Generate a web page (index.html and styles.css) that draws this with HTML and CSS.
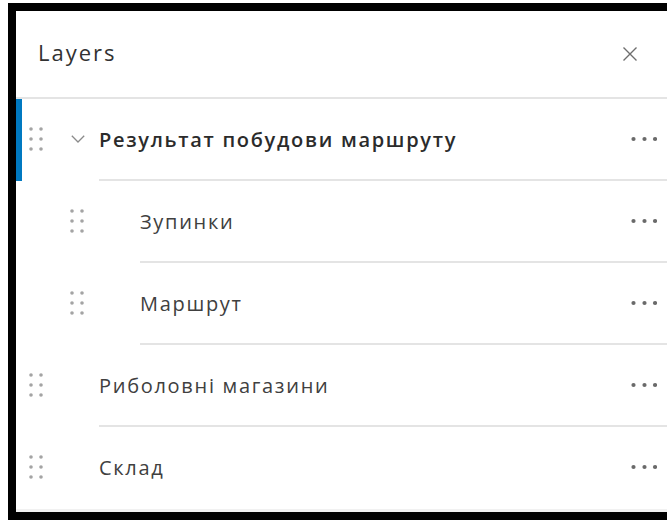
FILE: index.html
```html
<!DOCTYPE html>
<html lang="uk">
<head>
<meta charset="utf-8">
<title>Layers</title>
<link rel="stylesheet" href="styles.css">
</head>
<body>
<div class="frame">
  <section class="panel">
    <header class="panel-header">
      <h2 class="panel-title">Layers</h2>
      <button class="close" aria-label="Close">
        <svg width="16" height="16" viewBox="0 0 16 16"><path d="M1.5 1.5 L14.5 14.5 M14.5 1.5 L1.5 14.5" stroke="#6e6e6e" stroke-width="1.4" fill="none"/></svg>
      </button>
    </header>

    <ul class="layer-list">
      <li class="layer layer--active">
        <span class="handle"><svg width="14" height="24" viewBox="0 0 14 24"><g fill="#a4a4a4"><circle cx="2" cy="2" r="1.8"/><circle cx="12" cy="2" r="1.8"/><circle cx="2" cy="12" r="1.8"/><circle cx="12" cy="12" r="1.8"/><circle cx="2" cy="22" r="1.8"/><circle cx="12" cy="22" r="1.8"/></g></svg></span>
        <span class="toggle"><svg width="14" height="8" viewBox="0 0 14 8"><path d="M0.8 0.8 L7 7 L13.2 0.8" stroke="#8a8a8a" stroke-width="1.3" fill="none"/></svg></span>
        <div class="layer-main">
          <span class="label label--strong">Результат побудови маршруту</span>
          <span class="more"><svg width="26" height="6" viewBox="0 0 26 6"><g fill="#6a6a6a"><circle cx="2.5" cy="3" r="2.1"/><circle cx="13.5" cy="3" r="2.1"/><circle cx="24" cy="3" r="2.1"/></g></svg></span>
        </div>
      </li>
      <li class="layer layer--child">
        <span class="handle"><svg width="14" height="24" viewBox="0 0 14 24"><g fill="#a4a4a4"><circle cx="2" cy="2" r="1.8"/><circle cx="12" cy="2" r="1.8"/><circle cx="2" cy="12" r="1.8"/><circle cx="12" cy="12" r="1.8"/><circle cx="2" cy="22" r="1.8"/><circle cx="12" cy="22" r="1.8"/></g></svg></span>
        <span class="toggle"></span>
        <div class="layer-main">
          <span class="label">Зупинки</span>
          <span class="more"><svg width="26" height="6" viewBox="0 0 26 6"><g fill="#6a6a6a"><circle cx="2.5" cy="3" r="2.1"/><circle cx="13.5" cy="3" r="2.1"/><circle cx="24" cy="3" r="2.1"/></g></svg></span>
        </div>
      </li>
      <li class="layer layer--child">
        <span class="handle"><svg width="14" height="24" viewBox="0 0 14 24"><g fill="#a4a4a4"><circle cx="2" cy="2" r="1.8"/><circle cx="12" cy="2" r="1.8"/><circle cx="2" cy="12" r="1.8"/><circle cx="12" cy="12" r="1.8"/><circle cx="2" cy="22" r="1.8"/><circle cx="12" cy="22" r="1.8"/></g></svg></span>
        <span class="toggle"></span>
        <div class="layer-main">
          <span class="label">Маршрут</span>
          <span class="more"><svg width="26" height="6" viewBox="0 0 26 6"><g fill="#6a6a6a"><circle cx="2.5" cy="3" r="2.1"/><circle cx="13.5" cy="3" r="2.1"/><circle cx="24" cy="3" r="2.1"/></g></svg></span>
        </div>
      </li>
      <li class="layer">
        <span class="handle"><svg width="14" height="24" viewBox="0 0 14 24"><g fill="#a4a4a4"><circle cx="2" cy="2" r="1.8"/><circle cx="12" cy="2" r="1.8"/><circle cx="2" cy="12" r="1.8"/><circle cx="12" cy="12" r="1.8"/><circle cx="2" cy="22" r="1.8"/><circle cx="12" cy="22" r="1.8"/></g></svg></span>
        <span class="toggle"></span>
        <div class="layer-main">
          <span class="label">Риболовні магазини</span>
          <span class="more"><svg width="26" height="6" viewBox="0 0 26 6"><g fill="#6a6a6a"><circle cx="2.5" cy="3" r="2.1"/><circle cx="13.5" cy="3" r="2.1"/><circle cx="24" cy="3" r="2.1"/></g></svg></span>
        </div>
      </li>
      <li class="layer layer--last">
        <span class="handle"><svg width="14" height="24" viewBox="0 0 14 24"><g fill="#a4a4a4"><circle cx="2" cy="2" r="1.8"/><circle cx="12" cy="2" r="1.8"/><circle cx="2" cy="12" r="1.8"/><circle cx="12" cy="12" r="1.8"/><circle cx="2" cy="22" r="1.8"/><circle cx="12" cy="22" r="1.8"/></g></svg></span>
        <span class="toggle"></span>
        <div class="layer-main">
          <span class="label">Склад</span>
          <span class="more"><svg width="26" height="6" viewBox="0 0 26 6"><g fill="#6a6a6a"><circle cx="2.5" cy="3" r="2.1"/><circle cx="13.5" cy="3" r="2.1"/><circle cx="24" cy="3" r="2.1"/></g></svg></span>
        </div>
      </li>
    </ul>
  </section>
</div>
</body>
</html>
```

FILE: styles.css
```css
html, body {
  margin: 0;
  padding: 0;
  background: #ffffff;
  overflow: hidden;
}

.frame {
  padding: 3px 0 0 8px;
}

.panel {
  box-sizing: border-box;
  width: 659px;
  border-style: solid;
  border-color: #000000;
  border-width: 8px 0 8px 8px;
  background: #ffffff;
  font-family: "Open Sans", "Noto Sans", sans-serif;
  color: #323232;
}

/* header */
.panel-header {
  display: flex;
  align-items: center;
  justify-content: space-between;
  height: 86px;
  padding: 0 29px 0 22px;
  border-bottom: 2px solid #e4e4e4;
}

.panel-title {
  margin: 0 0 5px;
  font-size: 22px;
  font-weight: 400;
  letter-spacing: 2px;
  color: #323232;
}

.close {
  display: flex;
  padding: 0;
  border: 0;
  background: none;
}

/* list */
.layer-list {
  list-style: none;
  margin: 0;
  padding: 0;
  border-bottom: 3px solid #f1f1f1;
}

.layer {
  display: flex;
  align-items: stretch;
  height: 82px;
}

.layer--active {
  box-shadow: inset 6px 0 0 #0079c1;
}

.layer--child {
  padding-left: 41px;
}

.handle {
  display: flex;
  align-items: center;
  justify-content: center;
  width: 40px;
  flex: none;
  margin-bottom: 2px;
}

.toggle {
  display: flex;
  align-items: center;
  justify-content: center;
  width: 43px;
  flex: none;
  margin-bottom: 2px;
}

.layer-main {
  flex: 1;
  display: flex;
  align-items: center;
  justify-content: space-between;
  border-bottom: 2px solid #e4e4e4;
  padding-right: 10px;
}

.layer--last .layer-main {
  border-bottom-color: transparent;
}

.label {
  font-size: 20px;
  letter-spacing: 1.7px;
  color: #404040;
}

.label--strong {
  font-weight: 600;
  color: #2b2b2b;
}

.more {
  display: flex;
}
```
